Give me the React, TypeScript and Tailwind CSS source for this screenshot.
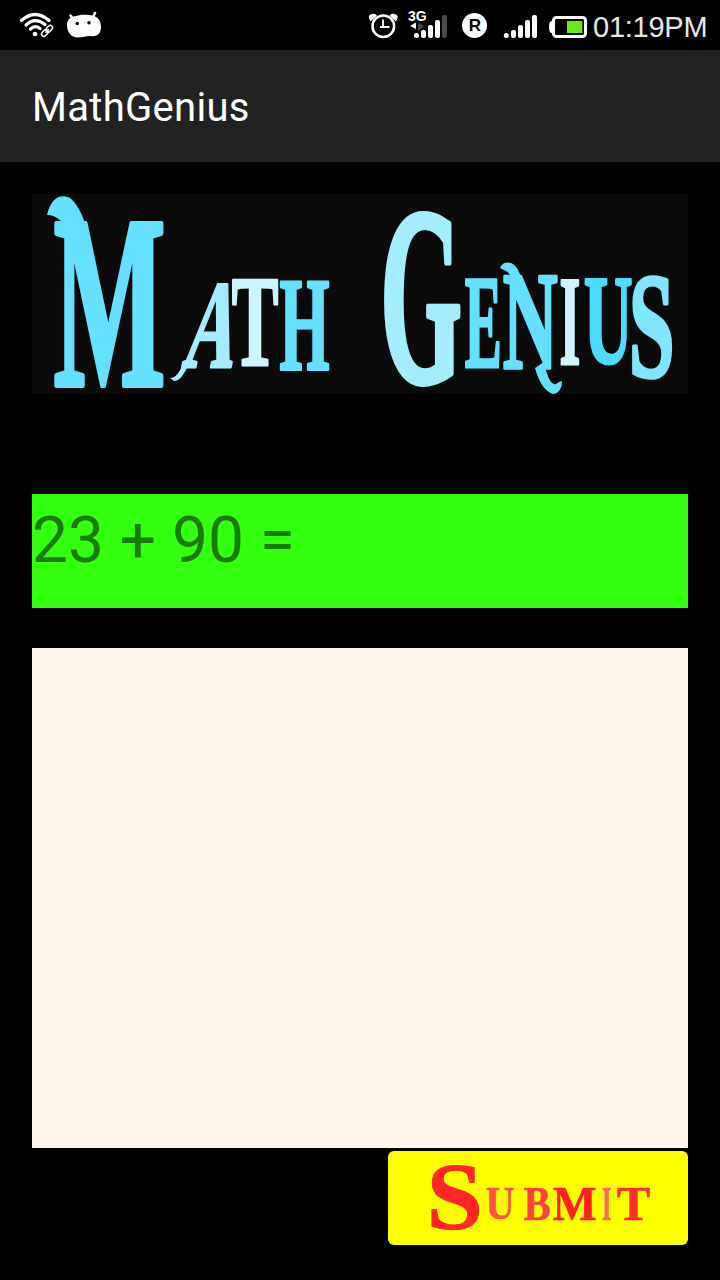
import React from 'react';

type Box = [number, number, number, number];

// Ink boxes of the bold serif capitals, in em: left, right, bottom overshoot, top
const INK: Record<string, Box> = {
  M: [0.014, 0.921, 0, 0.656],
  A: [0.009, 0.689, 0, 0.68],
  T: [0.031, 0.636, 0, 0.656],
  H: [0.021, 0.759, 0, 0.656],
  G: [0.037, 0.755, 0.014, 0.668],
  E: [0.016, 0.641, 0, 0.656],
  N: [0.016, 0.701, 0.014, 0.656],
  I: [0.02, 0.37, 0, 0.656],
  U: [0.016, 0.701, 0.014, 0.656],
  S: [0.04, 0.513, 0.014, 0.67],
  B: [0.016, 0.619, 0, 0.656],
};

interface Glyph {
  ch: string;
  fill: string;
  box: Box; // x1, y1, x2, y2
  slant?: number;
}

function Lettering({ glyphs, weight }: { glyphs: Glyph[]; weight: number }) {
  const pad = weight / 200;
  return (
    <>
      {glyphs.map(({ ch, fill, box: [x1, y1, x2, y2], slant = 0 }, i) => {
        const [l0, r0, b0, t0] = INK[ch];
        const [l, r, b, t] = [l0 - pad, r0 + pad, b0 + pad, t0 + pad];
        const sx = (x2 - x1) / (r - l) / 100;
        const sy = (y2 - y1) / (t + b) / 100;
        return (
          <text
            key={i}
            fill={fill}
            stroke={fill}
            strokeWidth={weight}
            strokeLinejoin="round"
            className="font-['Liberation_Serif',serif] text-[100px] font-bold"
            transform={`translate(${x1 - l * 100 * sx} ${y2 - b * 100 * sy}) skewX(${-slant}) scale(${sx} ${sy})`}
          >
            {ch}
          </text>
        );
      })}
    </>
  );
}

const TITLE: Glyph[] = [
  { ch: 'M', fill: '#66e0ff', box: [22, 27, 132, 194] },
  { ch: 'A', fill: '#a3edff', box: [149, 86, 198, 174], slant: 11 },
  { ch: 'T', fill: '#ccf5ff', box: [201, 85, 245, 173] },
  { ch: 'H', fill: '#66e0ff', box: [248, 86, 297, 177] },
  { ch: 'G', fill: '#a3edff', box: [351, 17, 429, 195] },
  { ch: 'E', fill: '#66e0ff', box: [433, 85, 469, 175] },
  { ch: 'N', fill: '#66e0ff', box: [471, 81, 525, 178] },
  { ch: 'I', fill: '#ccf5ff', box: [528, 86, 548, 172] },
  { ch: 'U', fill: '#4ddbff', box: [552, 84, 600, 172] },
  { ch: 'S', fill: '#80e5ff', box: [599, 80, 640, 187] },
];

const SUBMIT: Glyph[] = [
  { ch: 'S', fill: '#ff2626', box: [42, 14, 91, 80] },
  { ch: 'U', fill: '#ff5050', box: [98, 37, 126, 69] },
  { ch: 'B', fill: '#ff4040', box: [136, 37, 161, 69] },
  { ch: 'M', fill: '#ff1f1f', box: [165, 36, 208, 69] },
  { ch: 'I', fill: '#ff6666', box: [214, 37, 223, 69] },
  { ch: 'T', fill: '#ff2e2e', box: [230, 37, 261, 69] },
];

function WifiIcon() {
  return (
    <svg className="mt-[11px] h-[28px] w-[36px]" viewBox="19 11 36 28" fill="none" stroke="#fff" strokeLinecap="round">
      <path d="M21.5 20.5Q35 8.500 49 20.500" strokeWidth="3.200" />
      <path d="M26 25Q35 16.500 45 24.500" strokeWidth="3.200" />
      <path d="M30.500 29Q35 24.500 40 28.500" strokeWidth="3.200" />
      <circle cx="35" cy="34" r="2.300" fill="#fff" stroke="none" />
      <g strokeWidth="1.500">
        <rect x="45.500" y="26.500" width="7.500" height="4.600" rx="2.300" transform="rotate(-48 49.200 28.800)" />
        <rect x="41.200" y="30.600" width="7.500" height="4.600" rx="2.300" transform="rotate(-48 45 33)" />
        <path d="M45.800 32.200L48.500 29.500" />
      </g>
    </svg>
  );
}

function DroidIcon() {
  return (
    <svg className="mt-[10px] ml-[10px] h-[30px] w-[38px]" viewBox="65 10 38 30">
      <path d="M70.500 15.500L73.500 20M95 13L92.500 18" stroke="#fff" strokeWidth="2.600" strokeLinecap="round" />
      <path
        d="M67 25C67 19 71 16.500 76 16C81 14.500 88 14.500 93 15.800C98 17 101 21 101 27C101 33 98 36.500 92 36.200C87 35.500 83 37.500 78 37.500C71 37.500 67 32 67 25Z"
        fill="#fff"
      />
      <circle cx="77.300" cy="23.500" r="1.700" fill="#000" />
      <circle cx="89" cy="22.700" r="1.700" fill="#000" />
    </svg>
  );
}

function AlarmIcon() {
  return (
    <svg className="mt-[12px] h-[28px] w-[30px]" viewBox="368 12 30 28" fill="none" stroke="#fff">
      <circle cx="383.300" cy="26.300" r="10.800" strokeWidth="2.500" />
      <path d="M383 19.500V26.500M380 27H389.500" strokeWidth="1.800" />
      <path d="M370.500 21.500Q366.500 15 372 14Q375.500 13.300 377 15.500Z" fill="#fff" stroke="none" />
      <path d="M396 21.500Q400 15 394.500 14Q391 13.300 389.500 15.500Z" fill="#fff" stroke="none" />
    </svg>
  );
}

function MobileDataIcon() {
  return (
    <span className="relative mt-[10px] ml-[9px] h-[30px] w-[42px]">
      <svg className="h-[30px] w-[42px]" viewBox="407 10 42 30">
        <path d="M410 26L416 22.500V29Z" fill="#fff" />
        <path d="M418 22.500L424 26L418 31Z" fill="#4a4a4a" />
        <circle cx="416.500" cy="35.500" r="2.500" fill="#fff" />
        <rect x="421" y="30" width="5" height="8" rx="2" fill="#fff" />
        <rect x="428" y="25" width="5" height="13" rx="2" fill="#fff" />
        <rect x="435" y="20" width="5" height="18" rx="2" fill="#fff" />
        <rect x="442" y="15" width="5" height="23" rx="2" fill="#4a4a4a" />
      </svg>
      <span className="absolute top-0 left-px font-['Liberation_Sans',sans-serif] text-[14px] leading-[12px] font-bold text-white">
        3G
      </span>
    </span>
  );
}

function RoamingIcon() {
  return (
    <span className="mt-[13px] ml-[13px] flex h-[25px] w-[25px] items-center justify-center rounded-full bg-white pl-px font-['Liberation_Sans',sans-serif] text-[17px] leading-[25px] font-bold text-black">
      R
    </span>
  );
}

function SignalIcon() {
  return (
    <svg className="mt-[14px] ml-[16px] h-[25px] w-[34px]" viewBox="503 14 34 25" fill="#fff">
      <circle cx="506.300" cy="35.600" r="2.500" />
      <rect x="511" y="30" width="5" height="8" rx="2" />
      <rect x="518" y="25" width="5" height="13" rx="2" />
      <rect x="525" y="20" width="5" height="18" rx="2" />
      <rect x="532" y="15" width="5" height="23" rx="2" />
    </svg>
  );
}

function BatteryIcon() {
  return (
    <svg className="mt-[15px] ml-[12px] h-[24px] w-[39px]" viewBox="549 15 39 24">
      <path d="M553 21H551Q549 22 549 27Q549 32 551 33H553Z" fill="#fff" />
      <rect x="553.500" y="17.500" width="32" height="19" rx="3" fill="#000" stroke="#fff" strokeWidth="3" />
      <rect x="567" y="21" width="15.300" height="12" fill="#6ae61a" />
    </svg>
  );
}

export default function App() {
  return (
    <div className="flex h-[1280px] w-[720px] flex-col overflow-hidden bg-black">
      <div className="flex h-[50px] items-start justify-between pl-[19px]">
        <div className="flex">
          <WifiIcon />
          <DroidIcon />
        </div>
        <div className="flex w-[352px] items-start">
          <AlarmIcon />
          <MobileDataIcon />
          <RoamingIcon />
          <SignalIcon />
          <BatteryIcon />
          <span className="mt-[11px] ml-[5px] font-['Liberation_Sans',sans-serif] text-[29px] leading-[32px] tracking-[-0.25px] whitespace-nowrap text-[#e8e8e8]">
            01:19PM
          </span>
        </div>
      </div>

      <header className="flex h-[112px] items-center bg-[#222222] px-8 pt-1">
        <h1 className="font-[Roboto,sans-serif] text-[40px] leading-[48px] font-normal tracking-[0.3px] text-white">
          MathGenius
        </h1>
      </header>

      <main className="flex flex-col px-8 pt-8">
        <div className="h-[200px] bg-[#0a0a0a]">
          <svg className="h-[200px] w-[656px] overflow-visible" viewBox="0 0 656 200">
            <Lettering glyphs={TITLE} weight={2.4} />
            <path d="M15 21C19 5 27-1 38 4C52 15 58 44 64 78L49 68C42 45 31 20 15 21Z" fill="#66e0ff" />
            <path d="M138 184Q146 184 151 169L157 169Q150 187 142 187Z" fill="#a3edff" />
            <path d="M468 74Q471 67 479 69Q487 72 491 91L482 91Q480 79 472 76Z" fill="#66e0ff" />
            <path d="M512 168Q518 197 527 188L530 187Q530 199 521 200Q509 196 503 174Z" fill="#66e0ff" />
          </svg>
        </div>

        <div className="mt-[100px] h-[114px] bg-[#33ff0f] pt-[9px]">
          <p className="font-[Roboto,sans-serif] text-[64px] leading-[75px] whitespace-pre text-[#1b7b08]">23 + 90 =</p>
        </div>

        <textarea aria-label="Answer" className="mt-10 block h-[500px] w-full resize-none bg-[#fff6ed] p-4 outline-none" />

        <button
          type="button"
          aria-label="Submit"
          className="mt-[3px] h-[94px] w-[300px] self-end rounded-[6px] bg-[#ffff00]"
        >
          <svg className="h-[94px] w-[300px] overflow-visible" viewBox="0 0 300 94">
            <Lettering glyphs={SUBMIT} weight={1} />
          </svg>
        </button>
      </main>
    </div>
  );
}
